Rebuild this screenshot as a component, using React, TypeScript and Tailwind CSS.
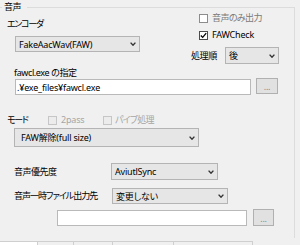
import React from "react";

function Chevron() {
  return (
    <svg width="6" height="4" viewBox="0 0 6 4" className="shrink-0">
      <path d="M0.6 0.6 L3 3.2 L5.4 0.6" fill="none" stroke="#333333" strokeWidth="1.4" />
    </svg>
  );
}

function Combo({ className, text }: { className: string; text: string }) {
  return (
    <div
      className={`flex items-center justify-between border border-[#b4b4b4] bg-[#e6e6e6] pr-[3px] ${className}`}
    >
      <span className="leading-none whitespace-nowrap">{text}</span>
      <Chevron />
    </div>
  );
}

function Check({ checked, tone }: { checked?: boolean; tone: "on" | "soft" | "off" }) {
  const cls =
    tone === "on"
      ? "border-[#4c4c4c] bg-white"
      : tone === "soft"
      ? "border-[#8c8c8c] bg-white"
      : "border-[#c6c6c6] bg-[#ececec]";
  return (
    <span className={`flex items-center justify-center w-[9px] h-[9px] shrink-0 border ${cls}`}>
      {checked && (
        <svg width="7" height="7" viewBox="0 0 7 7">
          <path d="M0.8 3.5 L2.7 5.4 L6.2 1.2" fill="none" stroke="#000000" strokeWidth="1.3" />
        </svg>
      )}
    </span>
  );
}

function Btn({ className }: { className: string }) {
  return (
    <div
      className={`flex items-end justify-center pb-[2px] border border-[#b0b0b0] bg-[#e1e1e1] text-[#8a8a8a] leading-none ${className}`}
    >
      ...
    </div>
  );
}

export default function App() {
  return (
    <div className="w-[300px] h-[245px] bg-[#f0f0f0] overflow-hidden text-[9px] leading-[12px] tracking-[-0.2px] text-black [font-family:'Noto_Sans','Noto_Sans_CJK_JP',sans-serif] [font-feature-settings:'palt']">
      <div className="relative mt-[7px] w-[295px] h-[231px] border-t border-r border-[#dcdcdc] flex flex-col">
        <span className="absolute left-[2px] top-[-7px] pl-[2px] pr-[6px] bg-[#f0f0f0] leading-[12px] tracking-[-0.4px]">
          音声
        </span>

        {/* Section A */}
        <div className="flex">
          <div className="w-[149px] flex flex-col">
            <span className="mt-[10px] ml-[7px] tracking-[-1.3px]">エンコーダ</span>
            <Combo className="mt-[6px] ml-[15px] w-[125px] h-[16px] pl-[3px]" text="FakeAacWav(FAW)" />
          </div>
          <div className="flex flex-col">
            <label className="mt-[4px] ml-[50px] flex items-center gap-[4px] h-[12px] text-[#7a7a7a]">
              <Check tone="soft" />
              <span className="tracking-[-0.6px]">音声のみ出力</span>
            </label>
            <label className="mt-[5px] ml-[50px] flex items-center gap-[4px] h-[12px]">
              <Check checked tone="on" />
              <span>FAWCheck</span>
            </label>
            <div className="mt-[6px] ml-[42px] flex items-center">
              <span className="w-[34px] tracking-[-0.4px]">処理順</span>
              <Combo className="w-[54px] h-[17px] pl-[3px]" text="後" />
            </div>
          </div>
        </div>

        {/* Section B */}
        <span className="mt-[3px] ml-[14px] tracking-[-0.4px]">fawcl.exe の指定</span>
        <div className="flex items-start ml-[15px]">
          <div className="w-[236px] h-[16px] bg-white border border-[#b9b9b9] pl-[1px] flex items-center leading-none">
            .¥exe_files¥fawcl.exe
          </div>
          <Btn className="ml-[5px] -mt-px w-[22px] h-[16px]" />
        </div>

        {/* Section C */}
        <div className="mt-[19px] flex items-center h-[12px]">
          <span className="ml-[7px] w-[41px] tracking-[-1.3px]">モード</span>
          <label className="w-[55px] flex items-center gap-[4px] text-[#a6a6a6]">
            <Check tone="off" />
            <span>2pass</span>
          </label>
          <label className="flex items-center gap-[3px] text-[#a6a6a6]">
            <Check tone="off" />
            <span className="tracking-[-0.8px]">パイプ処理</span>
          </label>
        </div>
        <Combo className="mt-[2px] ml-[14px] w-[185px] h-[19px] pl-[6px]" text="FAW解除(full size)" />

        {/* Section D */}
        <div className="mt-[16px] flex items-center">
          <span className="ml-[14px] w-[97px] tracking-[-0.5px]">音声優先度</span>
          <Combo className="w-[107px] h-[17px] pl-[3px]" text="AviutlSync" />
        </div>
        <div className="mt-[8px] flex items-center">
          <span className="ml-[14px] w-[98px] whitespace-nowrap tracking-[-1px]">音声一時ファイル出力先</span>
          <Combo className="w-[116px] h-[16px] pl-[3px]" text="変更しない" />
        </div>
        <div className="mt-[6px] ml-[57px] flex items-start">
          <div className="w-[190px] h-[16px] bg-white border border-[#b9b9b9]" />
          <Btn className="ml-[6px] -mt-px w-[21px] h-[17px]" />
        </div>
      </div>

      {/* Tabs */}
      <div className="mt-[3px] flex h-[4px]">
        <div className="w-[38px] bg-white border-t border-r border-[#cfcfcf]" />
        <div className="w-[36px] border-t border-r border-[#cfcfcf]" />
        <div className="w-[39px] border-t border-r border-[#cfcfcf]" />
        <div className="w-[61px] border-t border-r border-[#cfcfcf]" />
        <div className="w-[79px] border-t border-r border-[#cfcfcf]" />
      </div>
    </div>
  );
}
